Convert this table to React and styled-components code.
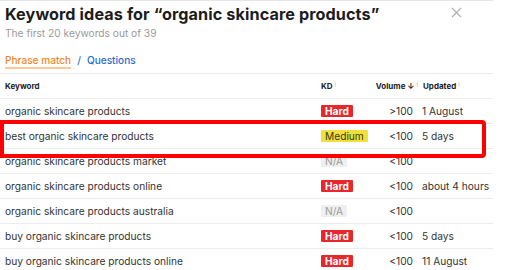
import React from 'react';
import styled, { createGlobalStyle } from 'styled-components';

const GlobalStyle = createGlobalStyle`
  html, body {
    margin: 0;
    padding: 0;
    background: #ffffff;
  }
  body {
    font-family: Inter, "Liberation Sans", Arial, sans-serif;
    color: #333;
  }
`;

const Page = styled.div`
  position: relative;
  width: 512px;
  height: 270px;
  overflow: hidden;
  background: #fff;
`;

const Modal = styled.div`
  width: 493px;
  border-top: 1px solid #e6e6e6;
  padding-top: 4px;
`;

const TitleBar = styled.div`
  display: flex;
  justify-content: space-between;
  align-items: flex-start;
  padding-left: 5px;
`;

const Title = styled.h1`
  margin: 0;
  font-size: 16.2px;
  line-height: 18px;
  font-weight: 700;
  color: #1c1c1c;
  letter-spacing: 0.1px;
`;

const Close = styled.button`
  border: none;
  background: none;
  padding: 0;
  margin: 2px 31px 0 0;
  width: 11px;
  height: 11px;
  display: flex;
  cursor: pointer;
`;

const Subtitle = styled.div`
  padding-left: 5px;
  margin-top: 3px;
  font-size: 10.2px;
  line-height: 14px;
  color: #9a9a9a;
`;

const Tabs = styled.div`
  display: flex;
  align-items: flex-end;
  gap: 6px;
  padding-left: 5px;
  margin-top: 14px;
  height: 15px;
  font-size: 10.1px;
  font-weight: 500;
  border-bottom: 1px solid #ececec;
  padding-bottom: 4px;
`;

const Tab = styled.span`
  color: ${p => (p.active ? '#f0872a' : '#2d6bd6')};
  border-bottom: ${p => (p.active ? '2px solid #fcc89a' : '2px solid transparent')};
  line-height: 13px;
`;

const Sep = styled.span`
  color: #2d6bd6;
  line-height: 13px;
  border-bottom: 2px solid transparent;
`;

const Grid = styled.div`
  display: grid;
  grid-template-columns: 321px 49px 43px 1fr;
`;

const HeadCell = styled.div`
  height: 24px;
  display: flex;
  align-items: center;
  justify-content: ${p => (p.right ? 'flex-end' : 'flex-start')};
  padding-left: ${p => p.pl || 0}px;
  font-size: 8px;
  font-weight: 700;
  color: #222;
  border-bottom: 1px solid #ececec;
  white-space: nowrap;
`;

const Info = styled.span`
  font-size: 6px;
  font-weight: 400;
  color: #b5b5b5;
  margin-left: 2px;
  margin-right: ${p => (p.overflow ? '-5px' : '0')};
  align-self: flex-start;
  margin-top: 7px;
`;

const Cell = styled.div`
  height: 24px;
  display: flex;
  align-items: center;
  justify-content: ${p => (p.right ? 'flex-end' : 'flex-start')};
  padding-left: ${p => p.pl || 0}px;
  font-size: 10.2px;
  color: #333;
  border-bottom: 1px solid #ececec;
  white-space: nowrap;
`;

const badgeColors = {
  Hard: { bg: '#e8262b', fg: '#fff', weight: 700 },
  Medium: { bg: '#efe03a', fg: '#3a3a1a', weight: 400 },
  'N/A': { bg: '#efefef', fg: '#9a9a9a', weight: 400 },
};

const Badge = styled.span`
  display: inline-block;
  height: 12px;
  line-height: 12px;
  padding: 0 4px;
  border-radius: 1px;
  font-size: 10.2px;
  background: ${p => badgeColors[p.kd].bg};
  color: ${p => badgeColors[p.kd].fg};
  font-weight: ${p => badgeColors[p.kd].weight};
`;

const Highlight = styled.div`
  position: absolute;
  left: 0;
  top: 120px;
  width: 486px;
  height: 38px;
  box-sizing: border-box;
  border: 4px solid #ff0000;
  border-radius: 0 4px 4px 0;
  pointer-events: none;
`;

const rows = [
  { kw: 'organic skincare products', kd: 'Hard', vol: '>100', upd: '1 August' },
  { kw: 'best organic skincare products', kd: 'Medium', vol: '<100', upd: '5 days' },
  { kw: 'organic skincare products market', kd: 'N/A', vol: '<100', upd: '' },
  { kw: 'organic skincare products online', kd: 'Hard', vol: '<100', upd: 'about 4 hours' },
  { kw: 'organic skincare products australia', kd: 'N/A', vol: '<100', upd: '' },
  { kw: 'buy organic skincare products', kd: 'Hard', vol: '<100', upd: '5 days' },
  { kw: 'buy organic skincare products online', kd: 'Hard', vol: '<100', upd: '11 August' },
];

export default function App() {
  return (
    <Page>
      <GlobalStyle />
      <Modal>
        <TitleBar>
          <Title>Keyword ideas for “organic skincare products”</Title>
          <Close aria-label="Close">
            <svg width="11" height="11" viewBox="0 0 11 11">
              <path d="M1 1 L10 10 M10 1 L1 10" stroke="#b0b0b0" strokeWidth="1.2" />
            </svg>
          </Close>
        </TitleBar>
        <Subtitle>The first 20 keywords out of 39</Subtitle>
        <Tabs>
          <Tab active>Phrase match</Tab>
          <Sep>/</Sep>
          <Tab>Questions</Tab>
        </Tabs>
        <Grid>
          <HeadCell pl={5}>Keyword</HeadCell>
          <HeadCell>KD<Info>i</Info></HeadCell>
          <HeadCell right>Volume ↓<Info overflow>i</Info></HeadCell>
          <HeadCell pl={10}>Updated<Info>i</Info></HeadCell>
          {rows.map((r, i) => (
            <React.Fragment key={i}>
              <Cell pl={5}>{r.kw}</Cell>
              <Cell><Badge kd={r.kd}>{r.kd}</Badge></Cell>
              <Cell right>{r.vol}</Cell>
              <Cell pl={9}>{r.upd}</Cell>
            </React.Fragment>
          ))}
        </Grid>
      </Modal>
      <Highlight />
    </Page>
  );
}
